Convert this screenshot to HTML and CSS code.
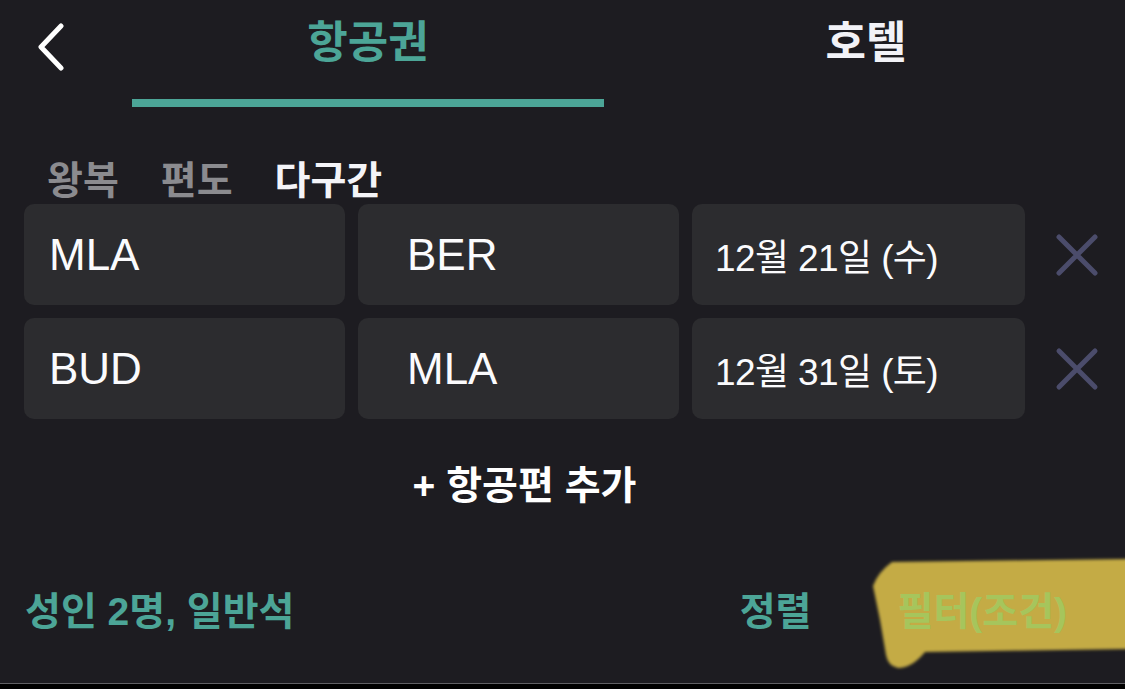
FILE: index.html
```html
<!DOCTYPE html>
<html lang="ko">
<head>
<meta charset="utf-8">
<link rel="stylesheet" href="styles.css">
</head>
<body>
<div class="page">
  <header class="header">
    <div class="back">
      <svg width="30" height="50" viewBox="0 0 30 50"><path d="M25 3 L5 24 L25 45" fill="none" stroke="#ffffff" stroke-width="5" stroke-linecap="round" stroke-linejoin="round"/></svg>
    </div>
    <div class="tab active">항공권</div>
    <div class="tab">호텔</div>
  </header>

  <nav class="segments">
    <span class="seg">왕복</span>
    <span class="seg">편도</span>
    <span class="seg on">다구간</span>
  </nav>

  <section class="legs">
    <div class="card from">MLA</div>
    <div class="card to">BER</div>
    <div class="card date">12월 21일 (수)</div>
    <div class="remove"><svg width="44" height="44" viewBox="0 0 44 44"><path d="M4 4 L40 40 M40 4 L4 40" stroke="#4b4c6b" stroke-width="5" stroke-linecap="round"/></svg></div>

    <div class="card from">BUD</div>
    <div class="card to">MLA</div>
    <div class="card date">12월 31일 (토)</div>
    <div class="remove"><svg width="44" height="44" viewBox="0 0 44 44"><path d="M4 4 L40 40 M40 4 L4 40" stroke="#4b4c6b" stroke-width="5" stroke-linecap="round"/></svg></div>
  </section>

  <div class="add-row"><span class="add">+ 항공편 추가</span></div>

  <div class="bottom">
    <span class="pax">성인 2명, 일반석</span>
    <span class="sort">정렬</span>
    <span class="filter">필터(조건)</span>
  </div>

  <svg class="marker" width="270" height="125" viewBox="860 550 270 125">
    <defs><filter id="b"><feGaussianBlur stdDeviation="1.8"/></filter></defs>
    <path d="M892 562 L1130 559 L1130 649 L925 652 Q912 668 898 668 Q888 666 886 655 L880 620 L873 586 Q878 572 892 562 Z" fill="#c4ab44" filter="url(#b)"/>
  </svg>

  <div class="footer"></div>
</div>
</body>
</html>
```

FILE: styles.css
```css
html, body {
  margin: 0;
  padding: 0;
  background: #1d1c21;
}
body {
  font-family: "Liberation Sans", "Noto Sans CJK KR", sans-serif;
  color: #f2f2f7;
}
.page {
  position: relative;
  width: 1125px;
  height: 689px;
  overflow: hidden;
  display: flex;
  flex-direction: column;
}
.header {
  display: flex;
  height: 107px;
}
.back {
  width: 132px;
  padding: 23px 0 0 36px;
  box-sizing: border-box;
}
.back svg { display: block; }
.tab {
  width: 472px;
  box-sizing: border-box;
  text-align: center;
  font-family: "Noto Sans CJK KR", sans-serif;
  font-weight: 700;
  font-size: 44px;
  line-height: 56px;
  padding-top: 11px;
  color: #f2f2f7;
}
.tab + .tab { margin-left: 26px; }
.tab.active {
  color: #4ca597;
  border-bottom: 8px solid #4ca597;
}
.segments {
  display: flex;
  gap: 42px;
  padding-left: 47px;
  margin-top: 50px;
  margin-bottom: 7px;
  font-family: "Noto Sans CJK KR", sans-serif;
  font-weight: 700;
  font-size: 39px;
  line-height: 40px;
}
.seg { color: #8b8b8f; }
.seg.on { color: #f4f4f8; }
.legs {
  display: grid;
  grid-template-columns: 321px 321px 333px 1fr;
  grid-auto-rows: 101px;
  column-gap: 13px;
  row-gap: 13px;
  padding-left: 24px;
}
.card {
  background: #2c2c2f;
  border-radius: 10px;
  display: flex;
  align-items: center;
  font-size: 44px;
  color: #fbfbfd;
}
.card.from { padding-left: 25px; }
.card.to { padding-left: 49px; }
.card.date { padding-left: 23px; font-size: 37px; letter-spacing: -0.6px; }
.remove {
  display: flex;
  align-items: center;
  padding-left: 17px;
}
.remove svg { display: block; }
.add-row {
  width: 1001px;
  padding-left: 24px;
  margin-top: 47px;
  text-align: center;
}
.add {
  font-weight: 700;
  font-size: 39px;
  line-height: 40px;
  color: #ffffff;
}
.bottom {
  display: flex;
  align-items: center;
  margin-top: 86px;
  padding-left: 25px;
  padding-right: 58px;
  font-weight: 700;
  font-size: 39px;
  line-height: 40px;
}
.pax { color: #4ca597; flex: 1; }
.sort { color: #4ca597; margin-right: 86px; }
.filter { color: #a6c55c; position: relative; z-index: 1; }
.marker {
  position: absolute;
  left: 860px;
  top: 550px;
  z-index: 0;
}
.footer {
  margin-top: auto;
  height: 5px;
  background: #000;
  border-top: 1px solid #606064;
}
```
